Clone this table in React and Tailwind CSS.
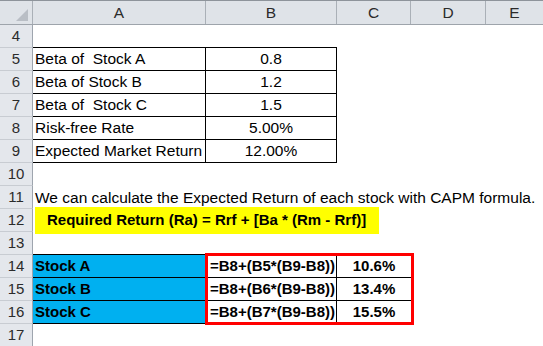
import React from "react";

const RowNum = ({ n }) => (
  <div className="w-[33px] shrink-0 bg-[#e4e7ec] border-r border-b border-r-[#9ea5ae] border-b-[#c8ccd2] flex items-center justify-center text-[15px] text-[#2b2b2b]">
    {n}
  </div>
);

const Row = ({ n, children }) => (
  <div className="flex h-[23px] shrink-0">
    <RowNum n={n} />
    {children}
  </div>
);

const Rest = ({ from = "C" }) => (
  <>
    {from === "B" && <div className="w-[131px] shrink-0" />}
    {(from === "B" || from === "C") && <div className="w-[74px] shrink-0" />}
    <div className="w-[75px] shrink-0" />
    <div className="w-[57px] shrink-0" />
  </>
);

const tableRows = [
  [5, "Beta of  Stock A", "0.8"],
  [6, "Beta of Stock B", "1.2"],
  [7, "Beta of  Stock C", "1.5"],
  [8, "Risk-free Rate", "5.00%"],
  [9, "Expected Market Return", "12.00%"],
];

const stockRows = [
  [14, "Stock A", "=B8+(B5*(B9-B8))", "10.6%"],
  [15, "Stock B", "=B8+(B6*(B9-B8))", "13.4%"],
  [16, "Stock C", "=B8+(B7*(B9-B8))", "15.5%"],
];

export default function App() {
  return (
    <div className="relative w-[543px] h-[346px] overflow-hidden bg-white font-['Liberation_Sans',Arial,sans-serif] text-[15.5px] text-black flex flex-col">
      {/* column header */}
      <div className="flex h-[25px] shrink-0 bg-[#dfe3e8] border-t border-b border-t-[#8e949b] border-b-[#9ea4ab] text-[#2b2b2b]">
        <div className="w-[33px] shrink-0 border-r border-[#aab0b7] flex items-end justify-end pr-[4px] pb-[3px]">
          <svg width="12" height="12" viewBox="0 0 12 12">
            <polygon points="12,0 12,12 0,12" fill="#b9bec5" />
          </svg>
        </div>
        <div className="w-[173px] shrink-0 border-r border-[#aab0b7] flex items-center justify-center">A</div>
        <div className="w-[131px] shrink-0 border-r border-[#aab0b7] flex items-center justify-center">B</div>
        <div className="w-[74px] shrink-0 border-r border-[#aab0b7] flex items-center justify-center">C</div>
        <div className="w-[75px] shrink-0 border-r border-[#aab0b7] flex items-center justify-center">D</div>
        <div className="w-[57px] shrink-0 flex items-center justify-center">E</div>
      </div>

      <Row n={4}>
        <div className="w-[173px] shrink-0 border-b border-black" />
        <div className="w-[131px] shrink-0 border-b border-black" />
        <Rest />
      </Row>

      {tableRows.map(([n, label, val]) => (
        <Row key={n} n={n}>
          <div className="w-[173px] shrink-0 border-b border-r border-black flex items-center pl-[2px] whitespace-pre">
            {label}
          </div>
          <div className="w-[131px] shrink-0 border-b border-r border-black flex items-center justify-center">
            {val}
          </div>
          <Rest />
        </Row>
      ))}

      <Row n={10}>
        <div className="w-[173px] shrink-0" />
        <Rest from="B" />
      </Row>

      <Row n={11}>
        <div className="w-[173px] shrink-0 flex items-center pl-[2px] whitespace-nowrap overflow-visible">
          We can calculate the Expected Return of each stock with CAPM formula.
        </div>
        <Rest from="B" />
      </Row>

      <Row n={12}>
        <div className="w-[173px] shrink-0" />
        <Rest from="B" />
      </Row>

      <Row n={13}>
        <div className="w-[173px] shrink-0 border-b border-black" />
        <Rest from="B" />
      </Row>

      {stockRows.map(([n, label, formula, pct]) => (
        <Row key={n} n={n}>
          <div className="w-[173px] shrink-0 bg-[#00b0f0] border-b border-r border-black flex items-center pl-[2px] font-bold text-[15px]">
            {label}
          </div>
          <div className="w-[131px] shrink-0 border-b border-r border-black flex items-center pl-[4px] font-bold text-[15px] whitespace-nowrap">
            {formula}
          </div>
          <div className="w-[74px] shrink-0 border-b border-black flex items-center justify-center font-bold text-[15px]">
            {pct}
          </div>
          <div className="w-[75px] shrink-0" />
          <div className="w-[57px] shrink-0" />
        </Row>
      ))}

      <Row n={17}>
        <div className="w-[173px] shrink-0" />
        <Rest from="B" />
      </Row>

      {/* yellow highlight */}
      <div className="absolute left-[35px] top-[207px] w-[344px] h-[27px] bg-[#ffff00] flex items-center pl-[12px] font-bold text-[15px] whitespace-nowrap">
        Required Return (Ra) = Rrf + [Ba * (Rm - Rrf)]
      </div>

      {/* red outline */}
      <div className="absolute left-[205px] top-[253px] w-[209px] h-[72px] border-[3px] border-[#ff0000] pointer-events-none" />
    </div>
  );
}
